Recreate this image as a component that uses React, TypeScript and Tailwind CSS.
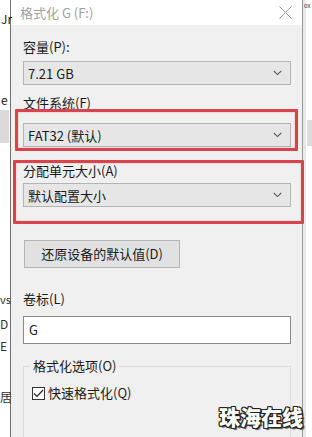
import React from "react";

const font = { fontFamily: '"Noto Sans CJK SC", "Noto Sans", sans-serif' };

function Chevron() {
  return (
    <svg width="9" height="6" viewBox="0 0 9 6" className="shrink-0">
      <path d="M0.8 1 L4.5 4.6 L8.2 1" fill="none" stroke="#5a5a5a" strokeWidth="1.1" />
    </svg>
  );
}

function Combo({ value, mt }: { value: string; mt: string }) {
  return (
    <div
      className={`${mt} h-[24px] w-[268px] flex items-center justify-between pl-[4px] pr-[8px] bg-[#e6e6e6] border border-[#b4b4b4] text-[13px] text-[#1a1a1a]`}
    >
      <span className="leading-none">{value}</span>
      <Chevron />
    </div>
  );
}

export default function App() {
  return (
    <div
      className="relative w-[312px] h-[437px] overflow-hidden bg-white flex text-[#1a1a1a]"
      style={font}
    >
      {/* left background strip */}
      <div className="w-[10px] shrink-0 relative">
        <div className="absolute left-0 top-[110px] w-[9px] h-[33px] bg-[#dadada]" />
        <span className="absolute left-[1px] top-[13px] text-[12px] leading-none text-[#222]">Jr</span>
        <span className="absolute left-[1px] top-[94px] text-[12px] leading-none text-[#222]">e</span>
        <span className="absolute left-[0px] top-[294px] text-[11px] leading-none text-[#333]">vs</span>
        <span className="absolute left-[0px] top-[318px] text-[12px] leading-none text-[#333]">D</span>
        <span className="absolute left-[0px] top-[340px] text-[12px] leading-none text-[#333]">E</span>
        <span className="absolute left-[0px] top-[391px] text-[12px] leading-none text-[#333]">居</span>
      </div>

      {/* dialog */}
      <div className="w-[293px] shrink-0 flex flex-col border-l border-[#707070] border-r border-r-[#9a9a9a]">
        {/* title bar */}
        <div className="h-[25px] shrink-0 bg-white flex items-center justify-between pl-[9px] pr-[10px]">
          <span className="text-[13px] text-[#a0a0a0] leading-none">格式化 G (F:)</span>
          <svg width="13" height="13" viewBox="0 0 13 13">
            <path d="M0.5 0.5 L12.5 12.5 M12.5 0.5 L0.5 12.5" stroke="#9a9a9a" strokeWidth="1" />
          </svg>
        </div>

        {/* body */}
        <div className="flex-1 bg-[#f0f0f0] flex flex-col pl-[12px] text-[13px]">
          <div className="mt-[14px] h-[16px] leading-[16px]">容量(P):</div>
          <Combo value="7.21 GB" mt="mt-[6px]" />

          <div className="mt-[10px] h-[16px] leading-[16px]">文件系统(F)</div>
          <Combo value="FAT32 (默认)" mt="mt-[12px]" />

          <div className="mt-[16px] h-[16px] leading-[16px]">分配单元大小(A)</div>
          <Combo value="默认配置大小" mt="mt-[4px]" />

          <div className="mt-[33px] h-[28px] w-[156px] ml-[1px] flex items-center justify-center bg-[#e1e1e1] border border-[#b4b4b4]">
            还原设备的默认值(D)
          </div>

          <div className="mt-[23px] h-[16px] leading-[16px]">卷标(L)</div>
          <div className="mt-[9px] h-[28px] w-[268px] bg-white border border-[#8a8a8a] flex items-center pl-[5px]">
            G
          </div>

          {/* group box */}
          <div className="relative mt-[22px] w-[268px] flex-1 border border-[#dcdcdc] border-b-0">
            <span className="absolute left-[6px] top-[-9px] px-[3px] bg-[#f0f0f0] leading-[16px]">
              格式化选项(O)
            </span>
            <div className="mt-[18px] ml-[8px] flex items-center gap-[3px]">
              <div className="w-[13px] h-[13px] bg-white border border-[#333] flex items-center justify-center">
                <svg width="11" height="9" viewBox="0 0 11 9">
                  <path d="M1 4.5 L4 7.5 L10 1" fill="none" stroke="#222" strokeWidth="1.2" />
                </svg>
              </div>
              <span className="leading-[16px]">快速格式化(Q)</span>
            </div>
          </div>
        </div>
      </div>

      {/* right background strip */}
      <div className="flex-1 relative bg-white">
        <div className="absolute left-[0px] top-0 w-[3px] h-full bg-[#e8e8e8]" />
        <div className="absolute left-[4px] top-[120px] w-[5px] h-[26px] bg-[#dcdcdc]" />
        <span className="absolute left-[1px] top-[2px] text-[6px] leading-[7px] text-[#333]">ox</span>
      </div>

      {/* red annotation boxes */}
      <div className="absolute left-[15px] top-[109px] w-[283px] h-[42px] border-[3px] border-[#d9434b] rounded-[1px] shadow-[inset_0_0_2px_rgba(217,67,75,0.4)]" />
      <div className="absolute left-[13px] top-[160px] w-[291px] h-[64px] border-[3px] border-[#d9434b] rounded-[1px] shadow-[inset_0_0_2px_rgba(217,67,75,0.4)]" />

      {/* watermark */}
      <div className="absolute left-[219px] top-[406px] text-[21px] font-black leading-none text-white [text-shadow:1px_0_0_#222,-1px_0_0_#222,0_1px_0_#222,0_-1px_0_#222,1px_1px_0_#222,-1px_-1px_0_#222,1px_-1px_0_#222,-1px_1px_0_#222,2px_2px_1px_#555]">
        珠海在线
      </div>
    </div>
  );
}
